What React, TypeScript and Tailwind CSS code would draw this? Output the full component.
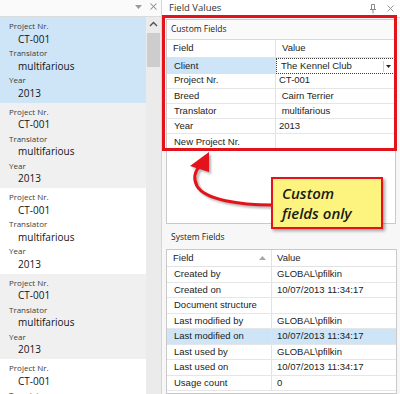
import { X } from 'lucide-react'

const entryRows: [string, string][] = [
  ['Project Nr.', 'CT-001'],
  ['Translator', 'multifarious'],
  ['Year', '2013'],
]

const entryBgs = ['bg-[#cde5f7]', 'bg-[#f0f0f0]', 'bg-white', 'bg-[#f0f0f0]', 'bg-white']

const customFields: [string, string][] = [
  ['Client', 'The Kennel Club'],
  ['Project Nr.', 'CT-001'],
  ['Breed', ' Cairn Terrier'],
  ['Translator', ' multifarious'],
  ['Year', '2013'],
  ['New Project Nr.', ''],
]

const systemFields: [string, string][] = [
  ['Created by', 'GLOBAL\\pfilkin'],
  ['Created on', '10/07/2013 11:34:17'],
  ['Document structure', ''],
  ['Last modified by', 'GLOBAL\\pfilkin'],
  ['Last modified on', '10/07/2013 11:34:17'],
  ['Last used by', 'GLOBAL\\pfilkin'],
  ['Last used on', '10/07/2013 11:34:17'],
  ['Usage count', '0'],
]

function Entry({ bg }: { bg: string }) {
  return (
    <div className={`h-[85.5px] shrink-0 pt-[2px] pl-[9px] ${bg}`}>
      {entryRows.map(([label, value]) => (
        <div key={label}>
          <div className="h-[13.5px] text-[8px] leading-[13.5px] text-[#3c3c3c]">{label}</div>
          <div className="h-[13.5px] pl-[9px] text-[10px] leading-[13.5px] text-[#141414]">{value}</div>
        </div>
      ))}
    </div>
  )
}

function PinIcon() {
  return (
    <svg width="8" height="10" viewBox="0 0 8 10" fill="none" stroke="#8a8a8a" strokeWidth="1">
      <path d="M2.5 0.5h3v5h-3z" />
      <path d="M1 5.5h6M4 5.5v4" />
    </svg>
  )
}

export default function App() {
  return (
    <div className="relative flex h-[394px] w-[400px] overflow-hidden bg-white font-['Liberation_Sans',sans-serif]">
      {/* left: document list */}
      <div className="flex w-[162px] flex-none flex-col border-r border-[#d6d6d6] font-['Open_Sans',sans-serif]">
        <div className="flex h-[17px] flex-none items-start justify-end gap-[5px] border-b border-[#dcdcdc] bg-[#fafafa] pt-[1px] pr-[2px]">
          <svg width="9" height="10" viewBox="0 0 9 10" className="mt-[1px]">
            <path d="M1 3h7L4.5 7z" fill="#9a9a9a" />
          </svg>
          <X size={11} strokeWidth={2.2} className="text-[#8c8c8c]" />
        </div>
        <div className="flex min-h-0 flex-1">
          <div className="flex w-[146px] flex-col overflow-hidden">
            {entryBgs.map((bg, i) => (
              <Entry key={i} bg={bg} />
            ))}
          </div>
          <div className="flex w-[15px] flex-col items-center bg-[#ebebeb] pt-[4px]">
            <svg width="9" height="6" viewBox="0 0 9 6">
              <path d="M1 5l3.5-3.5L8 5" stroke="#505050" strokeWidth="1.4" fill="none" />
            </svg>
            <div className="mt-[6px] h-[34px] w-[13px] bg-[#cdcdcd]" />
          </div>
        </div>
      </div>

      {/* right: field values */}
      <div className="flex flex-1 flex-col bg-[#f7f7f7] text-[9.5px] text-[#1c1c1c]">
        <div className="flex h-[18px] flex-none items-center justify-between border-b border-[#dcdcdc] bg-white pr-[4px] pl-[7px]">
          <span className="font-['Open_Sans',sans-serif] text-[9.5px] text-[#333]">Field Values</span>
          <div className="flex items-center gap-[8px]">
            <PinIcon />
            <X size={11} strokeWidth={2} className="text-[#8c8c8c]" />
          </div>
        </div>

        <div className="mx-[4px] mt-[1px] flex h-[205px] flex-none flex-col border border-[#c9c9c9] bg-white">
          <div className="flex h-[20px] flex-none items-center border-b border-[#d9d9d9] bg-[#fafafa] pl-[4px] font-['Open_Sans',sans-serif] text-[8.5px] text-[#222]">
            Custom Fields
          </div>
          <div className="grid h-[18px] flex-none grid-cols-[109px_1fr] border-b border-[#e2e2e2]">
            <div className="flex items-center border-r border-[#e2e2e2] pl-[6px]">Field</div>
            <div className="flex items-center pl-[6px]">Value</div>
          </div>
          {customFields.map(([field, value], i) => (
            <div key={field} className="grid h-[15.3px] flex-none grid-cols-[109px_1fr] border-b border-[#e6e6e6]">
              <div
                className={`flex items-center border-r border-[#e2e2e2] pl-[7px] ${i === 0 ? 'bg-[#cde5f7]' : ''}`}
              >
                {field}
              </div>
              {i === 0 ? (
                <div className="flex items-center border border-dotted border-[#3c3c3c] bg-white pl-[4px]">
                  <span className="flex-1">{value}</span>
                  <span className="mr-[1px] flex h-[11px] w-[10px] items-center justify-center border-l border-[#d0d0d0]">
                    <svg width="5" height="3" viewBox="0 0 5 3">
                      <path d="M0 0h5L2.5 3z" fill="#222" />
                    </svg>
                  </span>
                </div>
              ) : (
                <div className="flex items-center pl-[3px] whitespace-pre">{value}</div>
              )}
            </div>
          ))}
        </div>

        <div className="flex h-[25px] flex-none items-center pt-[2px] pl-[9px] font-['Open_Sans',sans-serif] text-[8.5px] text-[#222]">
          System Fields
        </div>

        <div className="mr-[3px] ml-[4px] flex flex-1 flex-col border border-[#c9c9c9] bg-white">
          <div className="grid h-[17px] flex-none grid-cols-[105px_1fr] border-b border-[#e2e2e2]">
            <div className="flex items-center justify-between border-r border-[#e2e2e2] pr-[5px] pl-[6px]">
              <span>Field</span>
              <svg width="7" height="4" viewBox="0 0 7 4">
                <path d="M0 4L3.5 0L7 4z" fill="#a8a8a8" />
              </svg>
            </div>
            <div className="flex items-center pl-[5px]">Value</div>
          </div>
          {systemFields.map(([field, value], i) => (
            <div
              key={field}
              className={`grid h-[15.5px] flex-none grid-cols-[105px_1fr] border-b border-[#e6e6e6] ${i === 4 ? 'bg-[#cde5f7]' : ''}`}
            >
              <div className="flex items-center border-r border-[#e2e2e2] pl-[7px]">{field}</div>
              <div className="flex items-center pl-[5px]">{value}</div>
            </div>
          ))}
        </div>
      </div>

      {/* annotation overlays */}
      <div className="pointer-events-none absolute top-[15px] left-[162px] h-[136px] w-[235px] border-[3px] border-[#e4121b]" />

      <svg className="pointer-events-none absolute inset-0" width="400" height="394" viewBox="0 0 400 394">
        <defs>
          <filter id="sh" x="-20%" y="-20%" width="140%" height="140%">
            <feGaussianBlur stdDeviation="1.2" />
          </filter>
        </defs>
        <g transform="translate(2 2)" filter="url(#sh)" opacity="0.45">
          <path d="M272 205C240 205 205 200 197 186C193 178 195 171 200 166" stroke="#555" strokeWidth="3" fill="none" />
          <path d="M209 152L190 166L209 172z" fill="#555" />
        </g>
        <path d="M272 205C240 205 205 200 197 186C193 178 195 171 200 166" stroke="#e4121b" strokeWidth="3" fill="none" />
        <path d="M209 152L190 166L209 172z" fill="#e4121b" />
      </svg>

      <div className="absolute top-[177px] left-[271px] flex h-[52px] w-[112px] flex-col justify-center border-2 border-[#e4121b] bg-[#fdf480] pl-[9px] font-['Open_Sans',sans-serif] text-[15px] leading-[20px] font-semibold text-[#1a1a1a] italic shadow-[2px_2px_3px_rgba(0,0,0,0.35)]">
        <span>Custom</span>
        <span>fields only</span>
      </div>
    </div>
  )
}
